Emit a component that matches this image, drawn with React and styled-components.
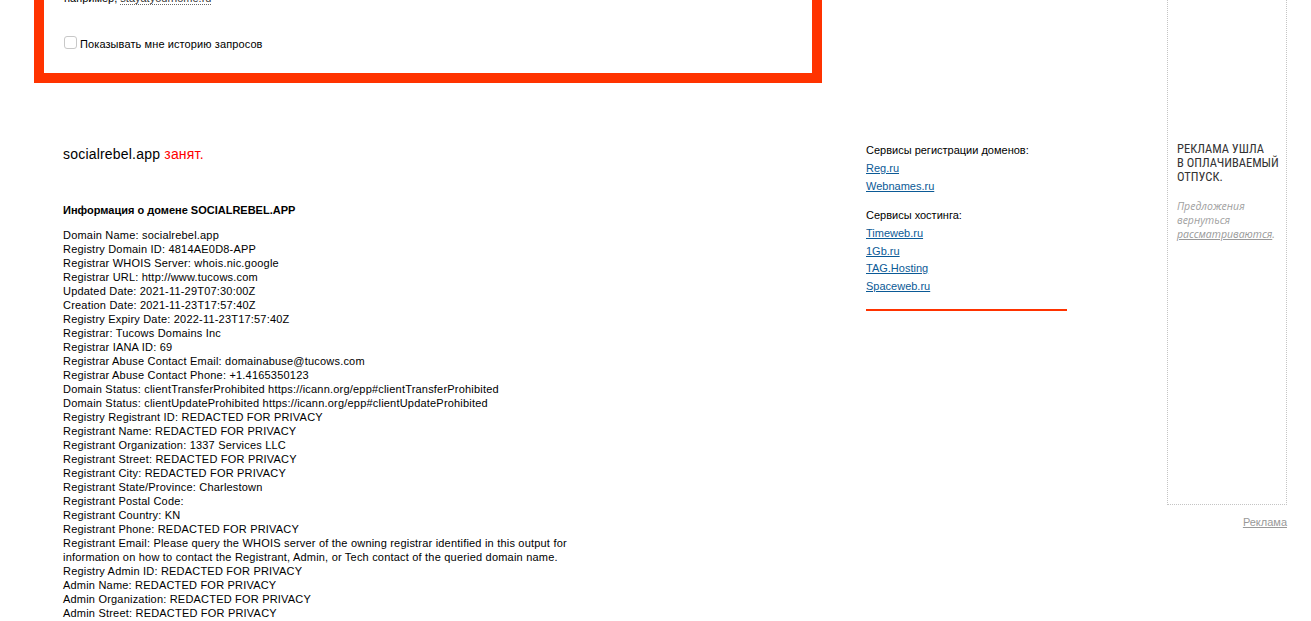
import React from "react";
import styled, { createGlobalStyle } from "styled-components";

const Global = createGlobalStyle`
  html, body { margin: 0; padding: 0; background: #fff; }
  body { font-family: "Liberation Sans", Arial, sans-serif; font-size: 11px; color: #000; }
`;

const Page = styled.div`
  display: flex;
  align-items: flex-start;
  padding-left: 34px;
  margin-top: -39px;
`;

const Main = styled.div`
  width: 1133px;
  display: flex;
  flex-direction: column;
`;

const SearchBox = styled.form`
  width: 788px;
  box-sizing: border-box;
  border: 10px solid #ff3300;
  padding: 20px 20px 24px 20px;
  display: flex;
  flex-direction: column;
  gap: 30px;
`;

const Hint = styled.div`
  line-height: 14px;
  color: #000;
`;

const Example = styled.span`
  border-bottom: 1px dotted #666;
  color: #333;
`;

const CheckRow = styled.label`
  display: flex;
  align-items: center;
  gap: 3px;
  height: 14px;
  line-height: 14px;
`;

const Check = styled.input`
  appearance: none;
  margin: 0;
  width: 13px;
  height: 13px;
  box-sizing: border-box;
  border: 1px solid #c8c8c8;
  border-radius: 3px;
  background: #fff;
`;

const CheckText = styled.span`
  margin-top: 4px;
  letter-spacing: 0.1px;
`;

const ContentRow = styled.div`
  display: flex;
  align-items: flex-start;
`;

const Result = styled.section`
  margin-left: 29px;
  width: 803px;
  padding-top: 62px;
`;

const Title = styled.div`
  font-size: 14px;
  line-height: 18px;
  color: #000;
  letter-spacing: 0.2px;
`;

const Busy = styled.span`
  color: #ff0000;
`;

const InfoHead = styled.h3`
  margin: 40px 0 11px;
  font-size: 11px;
  line-height: 14px;
  font-weight: bold;
`;

const Whois = styled.div`
  line-height: 14px;
  letter-spacing: 0.2px;
`;

const WhoisLine = styled.div`
  white-space: nowrap;
`;

const Services = styled.aside`
  width: 201px;
  padding-top: 60px;
`;

const ServHead = styled.div`
  line-height: 14px;
  margin-bottom: 3px;
`;

const ServGroup = styled.div`
  margin-bottom: ${(p) => p.$mb || 0}px;
`;

const ServLink = styled.a`
  display: block;
  line-height: 17.5px;
  color: #0b5a96;
  text-decoration: underline;
`;

const OrangeRule = styled.div`
  margin-top: 14px;
  height: 2px;
  background: #ff3300;
`;

const AdColumn = styled.div`
  width: 120px;
  display: flex;
  flex-direction: column;
`;

const AdBox = styled.div`
  height: 544px;
  box-sizing: border-box;
  border: 1px dotted #c4c4c4;
  padding: 180px 4px 0 9px;
`;

const AdTitle = styled.div`
  font-family: "Liberation Sans Narrow", "Roboto Condensed", Roboto, sans-serif;
  font-stretch: condensed;
  font-size: 12.5px;
  line-height: 14px;
  color: #333;
  text-transform: uppercase;
`;

const AdNote = styled.div`
  margin-top: 15px;
  font-family: "Open Sans", sans-serif;
  font-style: italic;
  font-size: 10.5px;
  line-height: 14px;
  color: #a0a0a0;
`;

const AdNoteLink = styled.a`
  color: #999;
  text-decoration: underline;
`;

const AdLabel = styled.a`
  align-self: flex-end;
  margin-top: 10px;
  line-height: 14px;
  color: #999;
  text-decoration: underline;
`;

const whois = [
  "Domain Name: socialrebel.app",
  "Registry Domain ID: 4814AE0D8-APP",
  "Registrar WHOIS Server: whois.nic.google",
  "Registrar URL: http://www.tucows.com",
  "Updated Date: 2021-11-29T07:30:00Z",
  "Creation Date: 2021-11-23T17:57:40Z",
  "Registry Expiry Date: 2022-11-23T17:57:40Z",
  "Registrar: Tucows Domains Inc",
  "Registrar IANA ID: 69",
  "Registrar Abuse Contact Email: domainabuse@tucows.com",
  "Registrar Abuse Contact Phone: +1.4165350123",
  "Domain Status: clientTransferProhibited https://icann.org/epp#clientTransferProhibited",
  "Domain Status: clientUpdateProhibited https://icann.org/epp#clientUpdateProhibited",
  "Registry Registrant ID: REDACTED FOR PRIVACY",
  "Registrant Name: REDACTED FOR PRIVACY",
  "Registrant Organization: 1337 Services LLC",
  "Registrant Street: REDACTED FOR PRIVACY",
  "Registrant City: REDACTED FOR PRIVACY",
  "Registrant State/Province: Charlestown",
  "Registrant Postal Code:",
  "Registrant Country: KN",
  "Registrant Phone: REDACTED FOR PRIVACY",
  "Registrant Email: Please query the WHOIS server of the owning registrar identified in this output for",
  "information on how to contact the Registrant, Admin, or Tech contact of the queried domain name.",
  "Registry Admin ID: REDACTED FOR PRIVACY",
  "Admin Name: REDACTED FOR PRIVACY",
  "Admin Organization: REDACTED FOR PRIVACY",
  "Admin Street: REDACTED FOR PRIVACY",
  "Admin City: REDACTED FOR PRIVACY",
  "Admin State/Province: REDACTED FOR PRIVACY",
  "Admin Postal Code: REDACTED FOR PRIVACY",
];

export default function App() {
  return (
    <>
      <Global />
      <Page>
        <Main>
          <SearchBox onSubmit={(e) => e.preventDefault()}>
            <Hint>
              например, <Example>stayatyourhome.ru</Example>
            </Hint>
            <CheckRow>
              <Check type="checkbox" />
              <CheckText>Показывать мне историю запросов</CheckText>
            </CheckRow>
          </SearchBox>
          <ContentRow>
            <Result>
              <Title>
                socialrebel.app <Busy>занят.</Busy>
              </Title>
              <InfoHead>Информация о домене SOCIALREBEL.APP</InfoHead>
              <Whois>
                {whois.map((l, i) => (
                  <WhoisLine key={i}>{l}</WhoisLine>
                ))}
              </Whois>
            </Result>
            <Services>
              <ServGroup $mb={13}>
                <ServHead>Сервисы регистрации доменов:</ServHead>
                <ServLink href="#">Reg.ru</ServLink>
                <ServLink href="#">Webnames.ru</ServLink>
              </ServGroup>
              <ServGroup>
                <ServHead>Сервисы хостинга:</ServHead>
                <ServLink href="#">Timeweb.ru</ServLink>
                <ServLink href="#">1Gb.ru</ServLink>
                <ServLink href="#">TAG.Hosting</ServLink>
                <ServLink href="#">Spaceweb.ru</ServLink>
              </ServGroup>
              <OrangeRule />
            </Services>
          </ContentRow>
        </Main>
        <AdColumn>
          <AdBox>
            <AdTitle>
              Реклама ушла
              <br />в оплачиваемый
              <br />
              отпуск.
            </AdTitle>
            <AdNote>
              Предложения
              <br />
              вернуться
              <br />
              <AdNoteLink href="#">рассматриваются</AdNoteLink>.
            </AdNote>
          </AdBox>
          <AdLabel href="#">Реклама</AdLabel>
        </AdColumn>
      </Page>
    </>
  );
}
